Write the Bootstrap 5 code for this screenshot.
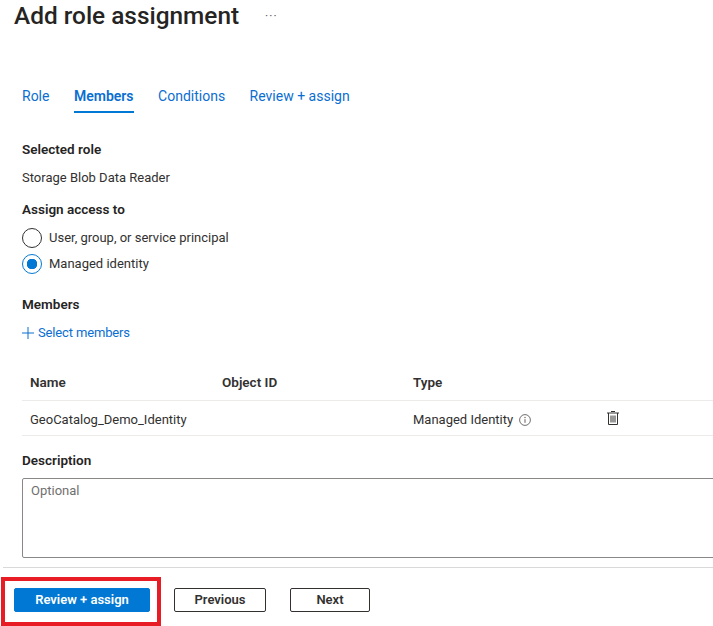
<!DOCTYPE html>
<html lang="en">
<head>
    <meta charset="UTF-8">
    <meta name="viewport" content="width=device-width, initial-scale=1.0">
    <title>Add role assignment</title>
    <link href="https://cdn.jsdelivr.net/npm/bootstrap@5.3.0/dist/css/bootstrap.min.css" rel="stylesheet">
    <style>
        html, body {
            height: 626px;
            overflow: hidden;
        }
        body {
            font-family: Roboto, "Noto Sans", sans-serif;
            font-size: 13px;
            line-height: 18px;
            color: #323130;
            background: #fff;
        }
        .blade-title {
            font-size: 24.4px;
            line-height: 32px;
            font-weight: 500;
            color: #252423;
            margin: 0;
        }
        .blade-header {
            padding: 0 0 0 14px;
            height: 86px;
        }
        .blade-more {
            margin-left: 26px;
            color: #605e5c;
            font-size: 12px;
            line-height: 32px;
            letter-spacing: 1px;
        }
        .tab-strip {
            padding-left: 22px;
            gap: 24.5px;
            height: 27px;
        }
        .tab-strip .nav-link {
            padding: 1px 0 0;
            height: 27px;
            color: #0a6ed1;
            font-size: 14px;
            line-height: 18px;
            border-bottom: 2px solid transparent;
        }
        .tab-strip .nav-link.active {
            color: #0a6ed1;
            font-weight: 600;
            border-bottom-color: #0078d4;
        }
        .form-area {
            padding-left: 22px;
            padding-top: 1px;
        }
        .field-label {
            font-size: 13.5px;
            line-height: 16px;
            padding-bottom: 2px;
            font-weight: 600;
            color: #252423;
            margin: 0;
        }
        .radio-row {
            height: 26px;
        }
        .radio-row .form-check-input {
            width: 20px;
            height: 20px;
            margin: 0 7px 0 0;
            border: 1px solid #323130;
            float: none;
        }
        .radio-row .form-check-input:checked {
            background-color: #fff;
            border-color: #0078d4;
            background-image: radial-gradient(circle, #0078d4 0, #0078d4 5px, transparent 5.5px);
        }
        .add-link {
            color: #0a6ed1;
            text-decoration: none;
            letter-spacing: -0.15px;
        }
        .members-table {
            margin: 21px 0 0;
            font-size: 13px;
            table-layout: fixed;
            width: 691px;
        }
        .members-table th, .members-table td {
            padding: 0 8px;
            vertical-align: middle;
            color: #323130;
            border-bottom: 1px solid #edebe9;
        }
        .members-table th {
            font-size: 13.5px;
            font-weight: 600;
            height: 35px;
        }
        .members-table td {
            height: 35px;
            padding-top: 4px;
        }
        .members-table td.icon-cell {
            padding-top: 0;
        }
        .info-icon {
            margin-left: 6px;
        }
        .desc-box {
            width: 700px;
            height: 80px;
            margin-top: 8px;
            border: 1px solid #8a8886;
            border-radius: 2px;
            padding: 3px 8px;
            font-size: 13px;
            line-height: 18px;
            resize: none;
            display: block;
        }
        .desc-box::placeholder {
            color: #707070;
            opacity: 1;
        }
        .blade-footer {
            margin: 9px 0 0 3px;
            border-top: 1px solid #d9d9d9;
            padding: 9px 0 0 0;
        }
        .callout-box {
            border: 4px solid #e81c24;
            margin-left: -2px;
            padding: 7px 8px 9px 9px;
            width: 160px;
            height: 49px;
        }
        .blade-btn {
            height: 24px;
            padding: 0;
            font-size: 13px;
            line-height: 20px;
            font-weight: 600;
            border-radius: 2px;
        }
        .blade-btn.btn-primary {
            width: 136px;
            background: #0078d4;
            border-color: #0078d4;
            color: #fff;
        }
        .blade-btn.btn-outline-dark {
            border: 1px solid #323130;
            color: #323130;
        }
        .blade-btn.btn-prev {
            width: 92px;
            margin-left: 13px;
        }
        .blade-btn.btn-next {
            width: 80px;
            margin-left: 24px;
        }
        .footer-side {
            padding-top: 11px;
        }
    </style>
</head>
<body>
    <header class="blade-header d-flex align-items-start">
        <h1 class="blade-title">Add role assignment</h1>
        <span class="blade-more">···</span>
    </header>

    <ul class="nav tab-strip">
        <li class="nav-item"><a class="nav-link" href="#">Role</a></li>
        <li class="nav-item"><a class="nav-link active" href="#">Members</a></li>
        <li class="nav-item"><a class="nav-link" href="#">Conditions</a></li>
        <li class="nav-item"><a class="nav-link" href="#">Review + assign</a></li>
    </ul>

    <div class="form-area">
        <p class="field-label" style="margin-top:27px">Selected role</p>
        <p class="mb-0" style="margin-top:10px">Storage Blob Data Reader</p>
        <p class="field-label" style="margin-top:14px">Assign access to</p>
        <div style="margin-top:6px">
            <div class="radio-row d-flex align-items-center">
                <input class="form-check-input" type="radio" name="access" id="r1">
                <label for="r1">User, group, or service principal</label>
            </div>
            <div class="radio-row d-flex align-items-center">
                <input class="form-check-input" type="radio" name="access" id="r2" checked>
                <label for="r2">Managed identity</label>
            </div>
        </div>
        <p class="field-label" style="margin-top:19px">Members</p>
        <a class="add-link d-inline-flex align-items-center" style="margin-top:10px" href="#">
            <svg width="12" height="12" viewBox="0 0 12 12" style="margin-right:4px"><path d="M6 0v12M0 6h12" stroke="#0a6ed1" stroke-width="1" fill="none"/></svg>Select members
        </a>

        <table class="table members-table">
            <colgroup><col style="width:192px"><col style="width:191px"><col style="width:193px"><col></colgroup>
            <thead>
                <tr><th>Name</th><th>Object ID</th><th>Type</th><th></th></tr>
            </thead>
            <tbody>
                <tr>
                    <td>GeoCatalog_Demo_Identity</td>
                    <td></td>
                    <td>
                        <span class="d-inline-flex align-items-center">Managed Identity
                            <svg class="info-icon" width="12" height="12" viewBox="0 0 12 12"><circle cx="6" cy="6" r="5.4" fill="none" stroke="#605e5c" stroke-width="0.9"/><path d="M6 5.2v3.6" stroke="#605e5c" stroke-width="1"/><circle cx="6" cy="3.5" r="0.7" fill="#605e5c"/></svg>
                        </span>
                    </td>
                    <td class="icon-cell">
                        <svg width="14" height="16" viewBox="0 0 14 16"><path d="M5 1.5h4M1 3h12M2.5 3v11.5h9V3M5 5.5v7M7 5.5v7M9 5.5v7" stroke="#323130" stroke-width="1" fill="none"/></svg>
                    </td>
                </tr>
            </tbody>
        </table>

        <p class="field-label" style="margin-top:16px">Description</p>
        <textarea class="desc-box" placeholder="Optional"></textarea>
    </div>

    <footer class="blade-footer d-flex align-items-start">
        <div class="callout-box flex-shrink-0">
            <button class="btn btn-primary blade-btn" type="button">Review + assign</button>
        </div>
        <div class="footer-side d-flex">
            <button class="btn btn-outline-dark blade-btn btn-prev" type="button">Previous</button>
            <button class="btn btn-outline-dark blade-btn btn-next" type="button">Next</button>
        </div>
    </footer>

    <script src="https://cdn.jsdelivr.net/npm/bootstrap@5.3.0/dist/js/bootstrap.bundle.min.js"></script>
</body>
</html>
